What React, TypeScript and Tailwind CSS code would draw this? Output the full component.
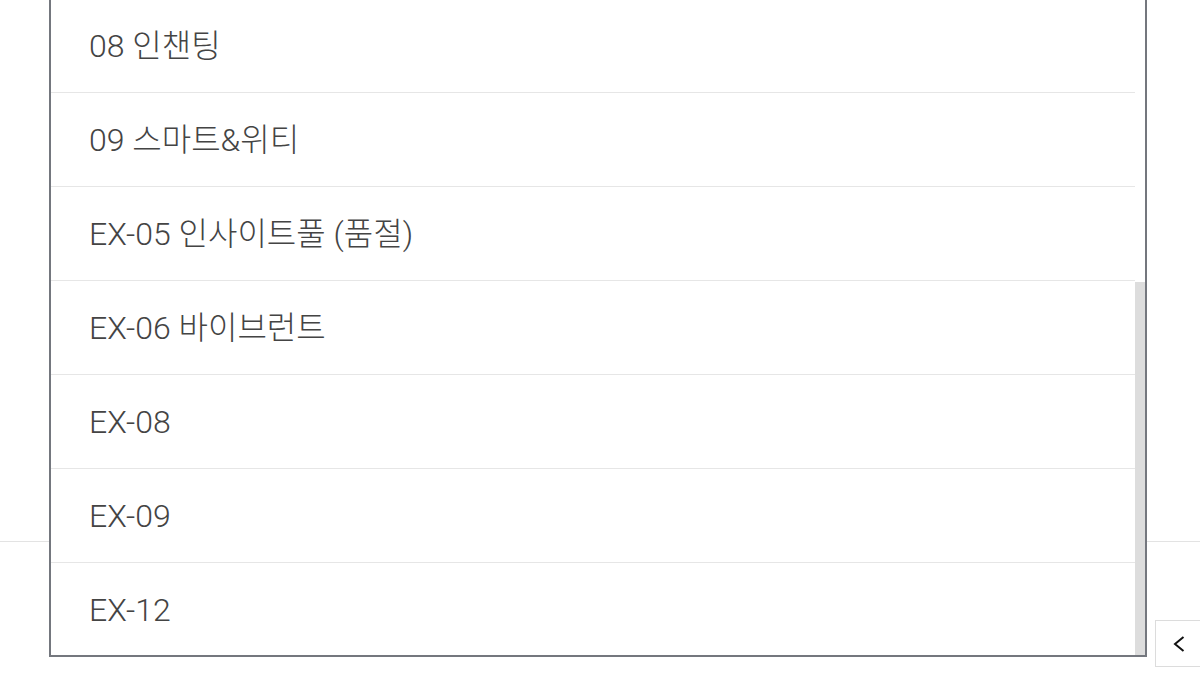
const items = [
  "08 인챈팅",
  "09 스마트&위티",
  "EX-05 인사이트풀 (품절)",
  "EX-06 바이브런트",
  "EX-08",
  "EX-09",
  "EX-12",
];

export default function App() {
  return (
    <div
      className="relative h-[674px] w-[1200px] overflow-hidden bg-white"
      style={{ fontFamily: "Roboto, 'Noto Sans CJK KR', sans-serif" }}
    >
      {/* page behind the list */}
      <div className="h-[541px]" />
      <div className="border-t border-[#e3e3e3] pt-[78px]">
        <div className="flex justify-end">
          <button className="-mr-[4px] flex h-[47px] w-[49px] items-center justify-center border border-[#dcdcdc] bg-white">
            <svg viewBox="0 0 12 16" className="-ml-[2px] h-[16px] w-[12px]" fill="none" stroke="#111" strokeWidth="2">
              <polyline points="10.5,1 2,8 10.5,15" />
            </svg>
          </button>
        </div>
      </div>

      {/* open select list */}
      <div className="absolute left-[49px] top-[-1px] flex h-[658px] w-[1098px] overflow-hidden border-2 border-t-0 border-[#74777e] bg-white">
        <ul className="flex-1">
          {items.map((item, i) => (
            <li
              key={i}
              className="flex h-[94px] items-center border-b border-[#e6e6e6] pl-[38px] text-[32px] font-light text-[#444] last:border-b-0"
            >
              {item}
            </li>
          ))}
        </ul>
        <div className="flex w-[10px] flex-col">
          <div className="h-[283px]" />
          <div className="flex-1 bg-[#dddddd]" />
        </div>
      </div>
    </div>
  );
}
